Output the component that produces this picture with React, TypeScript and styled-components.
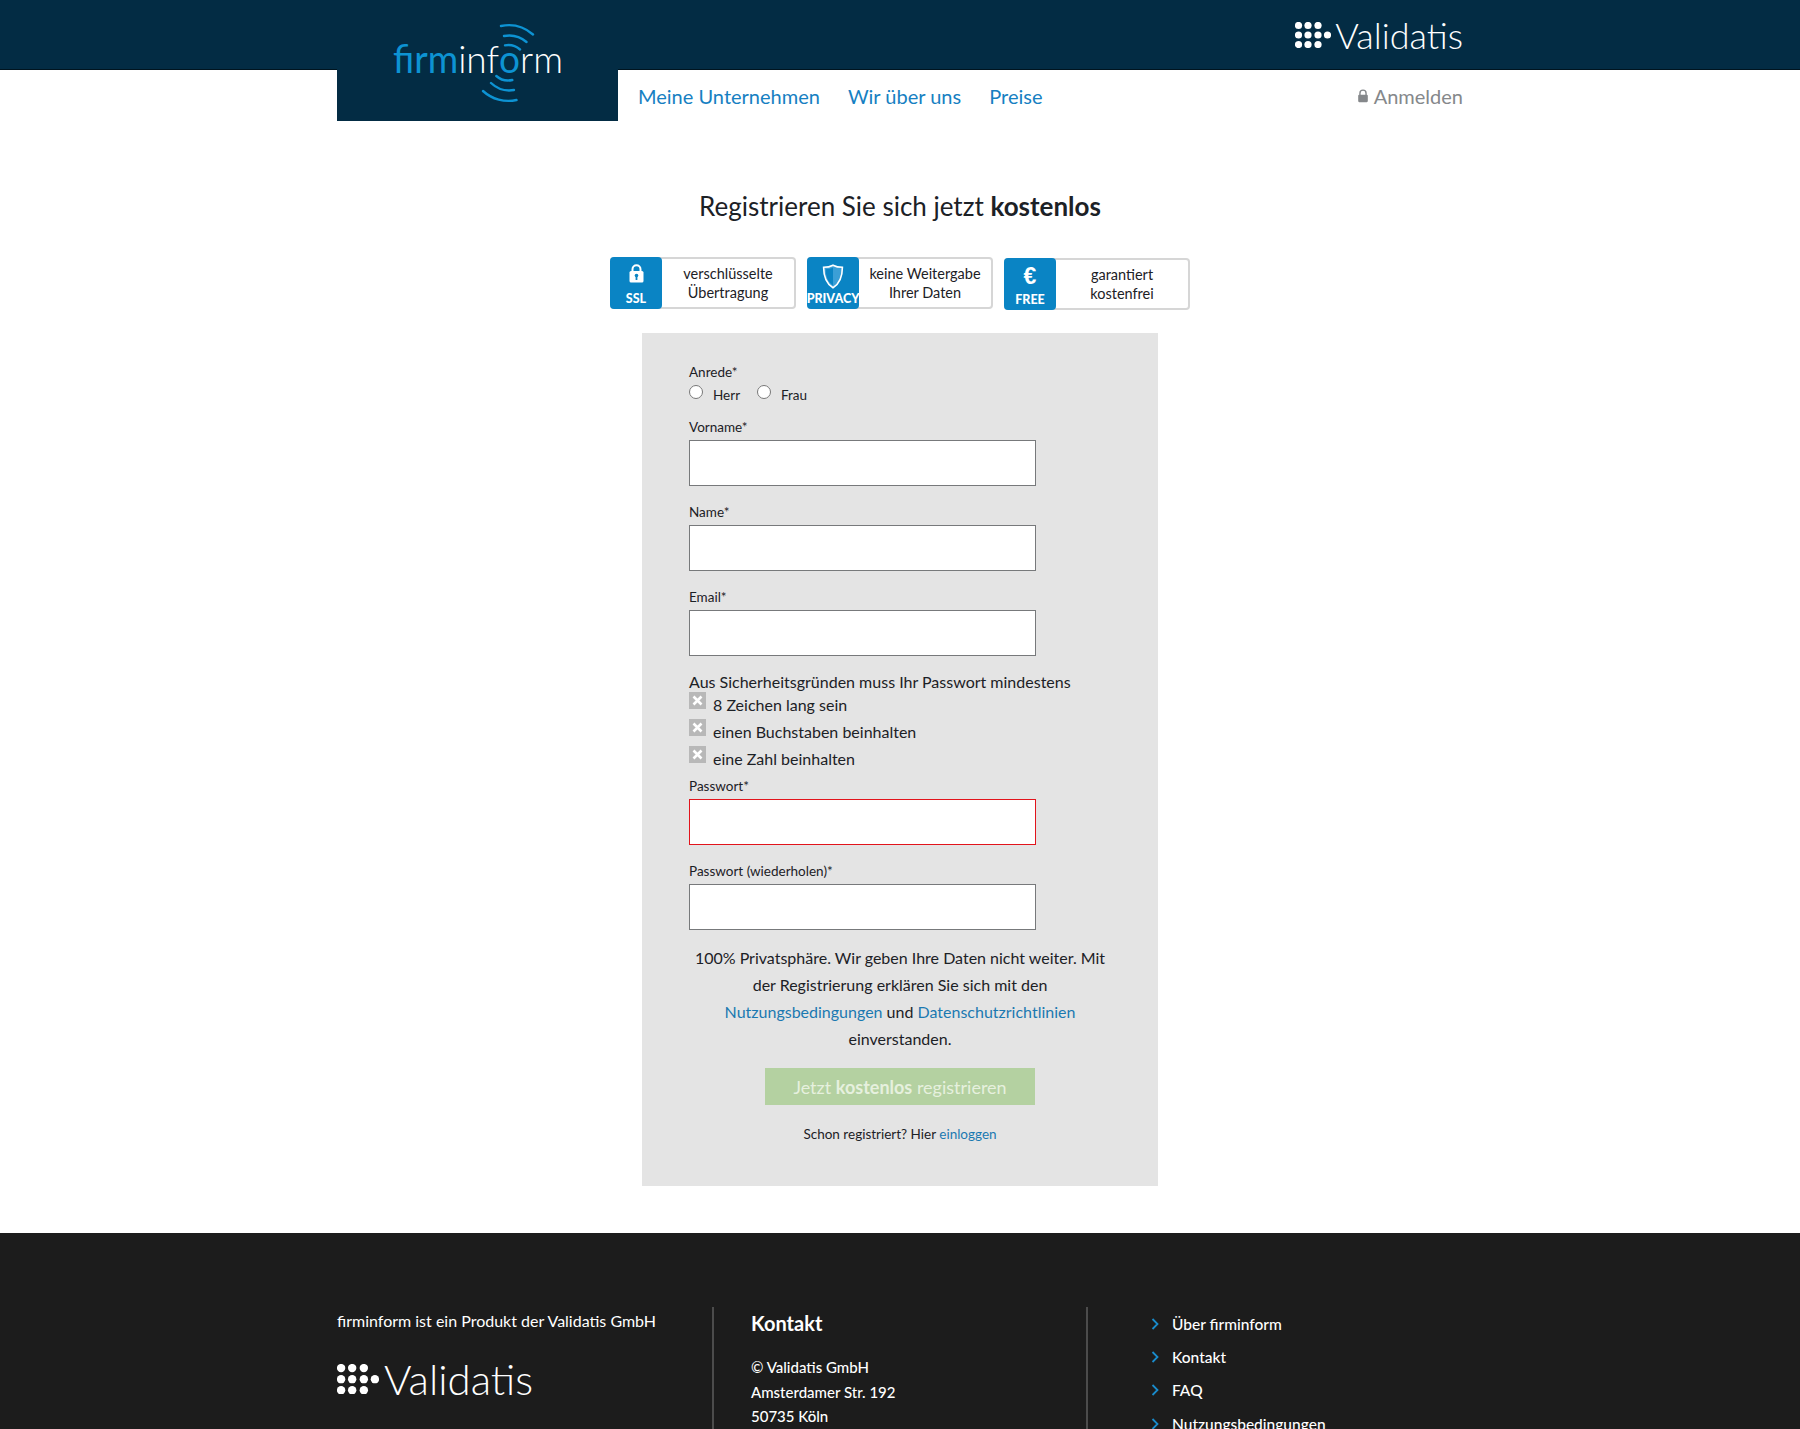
import React from "react";
import styled, { createGlobalStyle } from "styled-components";

const GlobalStyle = createGlobalStyle`
html,body{margin:0;padding:0;background:#fff;}
body{font-family:"Lato","Noto Sans","Liberation Sans",sans-serif;color:#1c2126;}
*{box-sizing:border-box;}
`;
const Page = styled.div`
width:1800px;
height:1429px;
overflow:hidden;
display:flex;
flex-direction:column;
`;
const Header = styled.header`
background:linear-gradient(#032c44 69px,#00141f 69px,#00141f 70px,#fff 70px);
`;
const HeaderInner = styled.div`
width:1126px;
margin:0 auto;
display:flex;
`;
const LogoBlock = styled.a`
width:281px;
height:121px;
background:#032c44;
flex:none;
display:block;
`;
const HeaderRight = styled.div`
flex:1;
display:flex;
flex-direction:column;
`;
const TopRow = styled.div`
height:70px;
display:flex;
justify-content:flex-end;
align-items:center;
padding-bottom:1px;
`;
const Brand = styled.div<{big?:boolean}>`
display:flex;
align-items:center;
gap:${(p)=>(p.big?"5px":"4px")};
color:#fff;
font-weight:300;
font-size:${(p)=>(p.big?"42px":"36px")};
line-height:1;
`;
const NavRow = styled.nav`
flex:1;
display:flex;
align-items:center;
padding-left:20px;
gap:28px;
`;
const NavLink = styled.a`
color:#1680c2;
font-size:20px;
`;
const Login = styled.a`
margin-left:auto;
color:#85888b;
font-size:20px;
display:flex;
align-items:center;
gap:4px;
`;
const Main = styled.main`
flex:1;
display:flex;
flex-direction:column;
align-items:center;
`;
const Title = styled.h1`
margin:68px 0 0;
font-size:26px;
line-height:34px;
font-weight:400;
b{font-weight:700;}
`;
const Badges = styled.div`
margin-top:34px;
display:flex;
gap:11px;
`;
const Badge = styled.div<{low?:boolean}>`
width:186px;
height:52px;
margin-top:${(p)=>(p.low?"1px":"0")};
margin-bottom:${(p)=>(p.low?"-1px":"0")};
display:flex;
background:#fff;
border:2px solid #d6d6d6;
border-left:none;
border-radius:4px;
`;
const BadgeIcon = styled.div`
width:52px;
margin:-2px 0;
flex:none;
background:#0a84c4;
border-radius:4px;
color:#fff;
display:flex;
flex-direction:column;
align-items:center;
justify-content:space-between;
padding:7px 0 3px;
font-size:12.5px;
line-height:14px;
font-weight:900;
`;
const BadgeText = styled.div`
flex:1;
text-align:center;
align-self:center;
font-size:14.5px;
line-height:19px;
`;
const Euro = styled.span`
font-family:"Liberation Sans",sans-serif;
font-size:23px;
line-height:23px;
font-weight:700;
`;
const Panel = styled.form`
margin-top:24px;
width:516px;
height:853px;
background:#e4e4e4;
padding:30px 47px 0;
`;
const Label = styled.label`
display:block;
height:18px;
font-size:13.5px;
line-height:18px;
`;
const RadioRow = styled.div`
display:flex;
align-items:center;
height:22px;
margin-top:2px;
`;
const Radio = styled.input`
width:14px;
height:14px;
margin:0 10px 4px 0;
`;
const RadioText = styled.span`
font-size:13.5px;
width:44px;
padding-top:1px;
`;
const Field = styled.div<{first?:boolean;tight?:boolean}>`
margin-top:${(p)=>(p.first?"13px":p.tight?"5px":"17px")};
`;
const Input = styled.input<{invalid?:boolean}>`
display:block;
width:347px;
height:46px;
margin-top:4px;
background:#fff;
border:1px solid ${(p)=>(p.invalid?"#e2141c":"#77797b")};
outline:none;
`;
const Hint = styled.div`
margin-top:17px;
font-size:16px;
line-height:18px;
white-space:nowrap;
`;
const Rule = styled.div`
height:27px;
display:flex;
align-items:flex-start;
gap:7px;
font-size:16px;
line-height:27px;
&:first-of-type{margin-top:3px;}
`;
const RuleIcon = styled.span`
width:17px;
height:17px;
margin-top:1px;
background:#b8b8b8;
display:flex;
align-items:center;
justify-content:center;
`;
const Privacy = styled.p`
margin:14px 0 0 -47px;
width:516px;
padding:0 50px;
text-align:center;
font-size:16px;
line-height:27px;
`;
const BlueLink = styled.a`
color:#1b79b1;
`;
const Submit = styled.button`
display:block;
width:270px;
height:37px;
margin:16px 0 0 76px;
border:none;
background:#b4d1a1;
color:#e6f0de;
font-family:inherit;
font-size:18px;
b{font-weight:700;}
`;
const Already = styled.p`
margin:20px 0 0 -47px;
width:516px;
text-align:center;
font-size:13.5px;
line-height:18px;
`;
const Footer = styled.footer`
height:196px;
background:#1c1c1c;
color:#fff;
overflow:hidden;
`;
const FooterInner = styled.div`
width:1126px;
height:100%;
margin:0 auto;
padding-top:74px;
display:flex;
`;
const FooterCol = styled.div<{w:number;divider?:boolean}>`
width:${(p)=>p.w}px;
flex:none;
height:140px;
border-left:${(p)=>(p.divider?"2px solid #4c4c4c":"none")};
padding-left:${(p)=>(p.divider?"37px":"0")};
`;
const ProductLine = styled.div`
font-size:16px;
line-height:22px;
margin:3px 0 26px;
`;
const ContactTitle = styled.h3`
margin:3px 0 19px;
font-size:20px;
line-height:26px;
font-weight:700;
`;
const ContactLine = styled.div`
font-size:15px;
line-height:24.5px;
font-weight:500;
`;
const LinkList = styled.ul`
list-style:none;
margin:0;
padding:0 0 0 26px;
`;
const LinkItem = styled.li`
height:33.3px;
display:flex;
align-items:center;
gap:13px;
font-size:15.5px;
font-weight:500;
`;

function Dots({big}:{big?:boolean}){
    const s=big?42/36:1;
    const pts=[[3.5,3.5],[13,3.5],[23,3.5],[3.5,13],[13,13],[23,13],[32.5,13],[3.5,22.5],[13,22.5],[23,22.5]];
    return(
        <svg width={36*s} height={26*s} viewBox="0 0 36 26">
            {pts.map(([x,y],i)=><circle key={i} cx={x} cy={y} r={3.6} fill="#fff" />)}
        </svg>
    );
}

function LogoMark(){
    const arc=(x1:number,y1:number,x2:number,y2:number,r:number)=>`M${172+x1} ${63+y1}A${r} ${r} 0 0 ${y1<0?1:1} ${172+x2} ${63+y2}`;
    return(
        <svg width="281" height="121" viewBox="0 0 281 121">
            <g fill="none" stroke="#0d93d3" strokeWidth="2.4" strokeLinecap="round">
                <path d={arc(-8,-37,24,-28.5,37.5)} />
                <path d={arc(-5,-27,17.5,-21,27)} />
                <path d={arc(-4,-17.6,11,-13.5,18)} />
                <path d={arc(7.5,37,-26,28,37.5)} />
                <path d={arc(5,27,-18,20,27)} />
                <path d={arc(3.3,17,-12.7,13,18)} />
            </g>
            <text x="56" y="73" fontFamily="Lato, sans-serif" fontSize="38" fontWeight="300" textLength="170" lengthAdjust="spacingAndGlyphs" fill="#fff">
                <tspan fill="#0d93d3" fontWeight="400">firm</tspan>inf<tspan fill="#0d93d3" fontWeight="400">o</tspan>rm
            </text>
        </svg>
    );
}

function LockIcon({size,color}:{size:number;color:string}){
    return(
        <svg width={size} height={size} viewBox="0 0 16 16">
            <path d="M4.5 7V4.8a3.5 3.5 0 0 1 7 0V7" fill="none" stroke={color} strokeWidth="1.6" />
            <rect x="2.5" y="6.5" width="11" height="8.5" rx="1.2" fill={color} />
        </svg>
    );
}

function SslIcon(){
    return(
        <svg width="17" height="19" viewBox="0 0 17 19">
            <path d="M4.5 8V5.2a4 4 0 0 1 8 0V8" fill="none" stroke="#fff" strokeWidth="2" />
            <rect x="1.5" y="7" width="14" height="11.5" rx="1.5" fill="#fff" />
            <circle cx="8.5" cy="11.5" r="1.8" fill="#0a84c4" />
            <rect x="7.6" y="12" width="1.8" height="4" fill="#0a84c4" />
        </svg>
    );
}

function ShieldIcon(){
    return(
        <svg width="22" height="25" viewBox="0 0 22 25">
            <path d="M11 1.2C8 2.8 5 3.3 1.6 3.3c0 9 2 16 9.4 20.5 7.4-4.5 9.4-11.5 9.4-20.5C17 3.3 14 2.8 11 1.2z" fill="#3b9fd6" stroke="#fff" strokeWidth="1.6" />
            <path d="M11 3.5v18c-5.5-4-7.2-9.600-7.300-16.300C6.500 5.100 9 4.500 11 3.500z" fill="#0a84c4" />
        </svg>
    );
}

export default function App(){
    return(
        <Page>
            <GlobalStyle />
            <Header>
                <HeaderInner>
                    <LogoBlock><LogoMark /></LogoBlock>
                    <HeaderRight>
                        <TopRow>
                            <Brand><Dots />Validatis</Brand>
                        </TopRow>
                        <NavRow>
                            <NavLink>Meine Unternehmen</NavLink>
                            <NavLink>Wir über uns</NavLink>
                            <NavLink>Preise</NavLink>
                            <Login><LockIcon size={14} color="#85888b" />Anmelden</Login>
                        </NavRow>
                    </HeaderRight>
                </HeaderInner>
            </Header>
            <Main>
                <Title>Registrieren Sie sich jetzt <b>kostenlos</b></Title>
                <Badges>
                    <Badge>
                        <BadgeIcon><SslIcon />SSL</BadgeIcon>
                        <BadgeText>verschlüsselte<br />Übertragung</BadgeText>
                    </Badge>
                    <Badge>
                        <BadgeIcon><ShieldIcon />PRIVACY</BadgeIcon>
                        <BadgeText>keine Weitergabe<br />Ihrer Daten</BadgeText>
                    </Badge>
                    <Badge low>
                        <BadgeIcon><Euro>€</Euro>FREE</BadgeIcon>
                        <BadgeText>garantiert<br />kostenfrei</BadgeText>
                    </Badge>
                </Badges>
                <Panel>
                    <Label>Anrede*</Label>
                    <RadioRow>
                        <Radio type="radio" name="anrede" /><RadioText>Herr</RadioText>
                        <Radio type="radio" name="anrede" /><RadioText>Frau</RadioText>
                    </RadioRow>
                    <Field first><Label>Vorname*</Label><Input /></Field>
                    <Field><Label>Name*</Label><Input /></Field>
                    <Field><Label>Email*</Label><Input /></Field>
                    <Hint>Aus Sicherheitsgründen muss Ihr Passwort mindestens</Hint>
                    {["8 Zeichen lang sein","einen Buchstaben beinhalten","eine Zahl beinhalten"].map((t)=>(
                        <Rule key={t}>
                            <RuleIcon>
                                <svg width="11" height="11" viewBox="0 0 11 11"><path d="M1.500 1.500l8 8M9.500 1.500l-8 8" stroke="#fff" strokeWidth="2.600" /></svg>
                            </RuleIcon>
                            {t}
                        </Rule>
                    ))}
                    <Field tight><Label>Passwort*</Label><Input invalid /></Field>
                    <Field><Label>Passwort (wiederholen)*</Label><Input /></Field>
                    <Privacy>
                        100% Privatsphäre. Wir geben Ihre Daten nicht weiter. Mit der Registrierung erklären Sie sich mit den <BlueLink>Nutzungsbedingungen</BlueLink> und <BlueLink>Datenschutzrichtlinien</BlueLink> einverstanden.
                    </Privacy>
                    <Submit type="button">Jetzt <b>kostenlos</b> registrieren</Submit>
                    <Already>Schon registriert? Hier <BlueLink>einloggen</BlueLink></Already>
                </Panel>
            </Main>
            <Footer>
                <FooterInner>
                    <FooterCol w={375}>
                        <ProductLine>firminform ist ein Produkt der Validatis GmbH</ProductLine>
                        <Brand big><Dots big />Validatis</Brand>
                    </FooterCol>
                    <FooterCol w={374} divider>
                        <ContactTitle>Kontakt</ContactTitle>
                        <ContactLine>© Validatis GmbH</ContactLine>
                        <ContactLine>Amsterdamer Str. 192</ContactLine>
                        <ContactLine>50735 Köln</ContactLine>
                    </FooterCol>
                    <FooterCol w={377} divider>
                        <LinkList>
                            {["Über firminform","Kontakt","FAQ","Nutzungsbedingungen"].map((t)=>(
                                <LinkItem key={t}>
                                    <svg width="8" height="12" viewBox="0 0 8 12"><path d="M1.500 1l5 5-5 5" fill="none" stroke="#1a8ccc" strokeWidth="1.800" /></svg>
                                    {t}
                                </LinkItem>
                            ))}
                        </LinkList>
                    </FooterCol>
                </FooterInner>
            </Footer>
        </Page>
    );
}
